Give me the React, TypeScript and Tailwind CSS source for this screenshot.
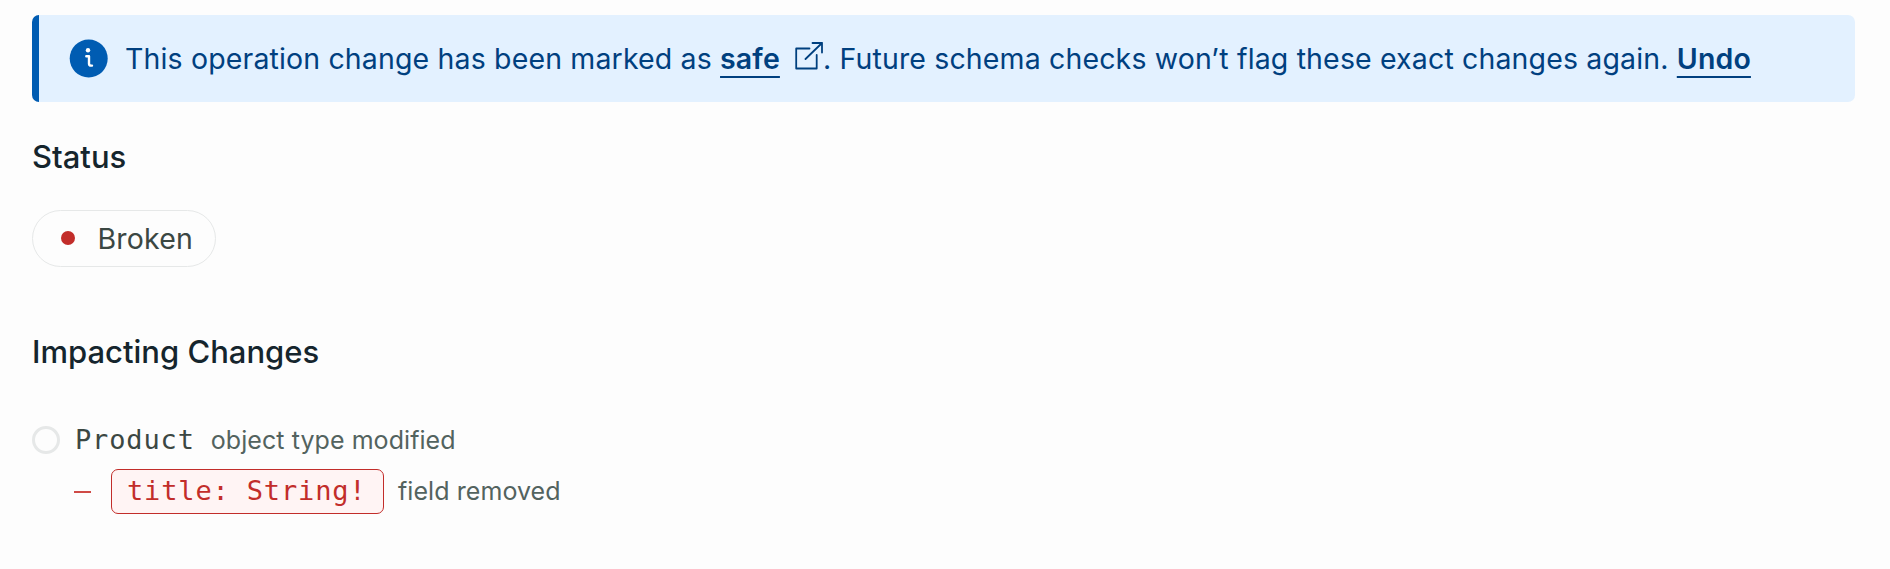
import React from "react";

function InfoIcon() {
  return (
    <svg className="ml-[30px] h-[39px] w-[39px] shrink-0" viewBox="0 0 39 39" fill="none">
      <circle cx="19.7" cy="19.5" r="19" fill="#005cb2" />
      <circle cx="19" cy="11.3" r="2.2" fill="#fff" />
      <path d="M17.3 17.2h2.7v7.2q0 2.2 2.1 2.2h.9" stroke="#fff" strokeWidth="2.4" strokeLinecap="round" strokeLinejoin="round" />
    </svg>
  );
}

function ExternalIcon() {
  return (
    <svg className="ml-[15px] inline-block h-[28px] w-[28px] align-[-1px]" viewBox="0 0 28 28" fill="none" stroke="#00407f" strokeWidth="1.8" strokeLinecap="round" strokeLinejoin="round">
      <path d="M14.5 6.5H1.2V26.5H21.7V13" />
      <path d="M17.5 1H27V10.5M27 1L10.5 17" />
    </svg>
  );
}

function Link({ children }: { children: React.ReactNode }) {
  return (
    <a href="#" className="font-semibold underline decoration-2 underline-offset-[7px] [text-decoration-skip-ink:none]">
      {children}
    </a>
  );
}

export default function App() {
  return (
    <main className="h-[569px] w-full overflow-hidden bg-[#fdfdfd] pt-[15px] pr-[35px] pl-8 font-['Inter',sans-serif]">
      <div className="flex h-[87px] items-center overflow-hidden rounded-[7px] border-l-[7px] border-[#005cb2] bg-[#e3f1ff]">
        <InfoIcon />
        <p className="ml-[17px] whitespace-nowrap text-[28.5px] leading-[44px] tracking-[0.145px] text-[#00407f]">
          This operation change has been marked as <Link>safe</Link>
          <ExternalIcon />. Future schema checks won’t flag these exact changes again. <Link>Undo</Link>
        </p>
      </div>

      <h2 className="mt-[35px] text-[31px] leading-10 font-medium text-[#15252d]">Status</h2>
      <div className="mt-[33px] flex h-[57px] w-[184px] items-center rounded-full border border-[#e6e8e8] pl-7">
        <span className="mb-px h-3.5 w-3.5 rounded-full bg-[#c22d2a]" />
        <span className="ml-[22.5px] text-[28.5px] leading-10 tracking-[0.2px] text-[#3b4743]">Broken</span>
      </div>

      <h2 className="mt-[65px] text-[31px] leading-10 font-medium text-[#15252d]">Impacting Changes</h2>
      <div className="mt-[47px] flex h-[42px] items-center">
        <span className="mb-px h-7 w-7 shrink-0 rounded-full border-[3px] border-[#e6e8e8]" />
        <code className="ml-[15px] font-['DejaVu_Sans_Mono',monospace] text-[27px] leading-10 tracking-[0.85px] text-[#3b4743]">Product</code>
        <span className="ml-4 text-[25px] leading-10 tracking-[0.07px] text-[#53635f]">object type modified</span>
      </div>
      <div className="mt-2 flex h-[45px] items-center pl-[42px]">
        <span className="h-0.5 w-[17px] bg-[#cf4a46]" />
        <code className="ml-5 flex h-[45px] w-[273px] items-center rounded-[7px] border border-[#c22d2a] bg-[#fff4f4] pb-0.5 pl-[15px] font-['DejaVu_Sans_Mono',monospace] text-[27px] leading-10 tracking-[0.85px] whitespace-pre text-[#c22d2a]">title: String!</code>
        <span className="mb-0.5 ml-3.5 text-[25px] leading-10 tracking-[0.07px] text-[#53635f]">field removed</span>
      </div>
    </main>
  );
}
